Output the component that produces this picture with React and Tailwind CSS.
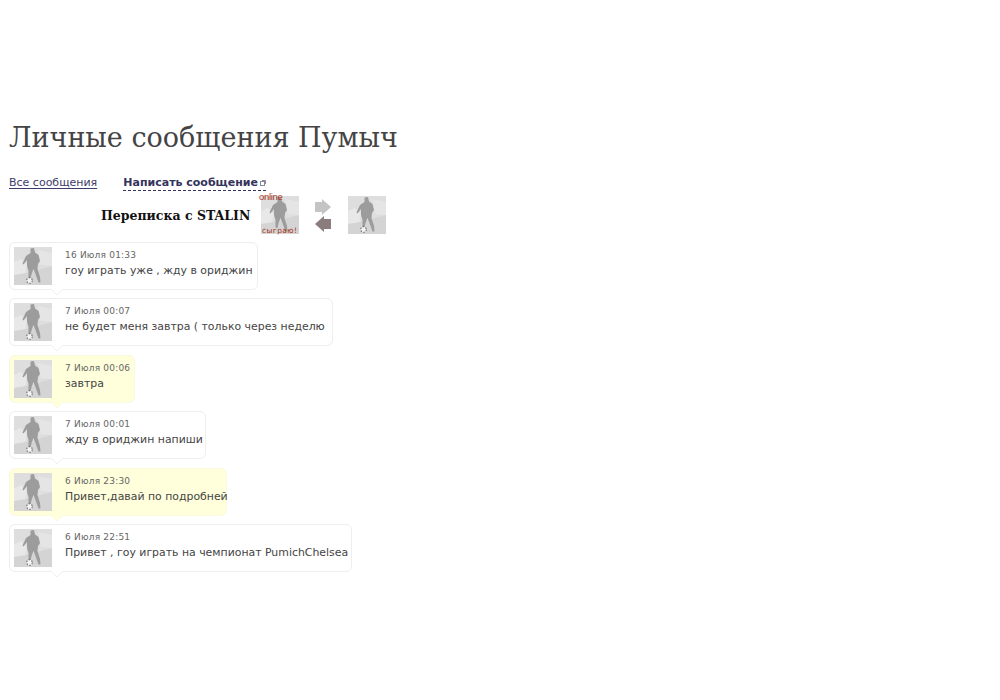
import React from 'react';

const messages = [
  { date: '16 Июля 01:33', text: 'гоу играть уже , жду в ориджин', width: 'w-[249px]' },
  { date: '7 Июля 00:07', text: 'не будет меня завтра ( только через неделю', width: 'w-[324px]' },
  { date: '7 Июля 00:06', text: 'завтра', width: 'w-[126px]', mine: true },
  { date: '7 Июля 00:01', text: 'жду в ориджин напиши', width: 'w-[197px]' },
  { date: '6 Июля 23:30', text: 'Привет,давай по подробней', width: 'w-[218px]', mine: true },
  { date: '6 Июля 22:51', text: 'Привет , гоу играть на чемпионат PumichChelsea', width: 'w-[343px]' },
];

// Player silhouette placeholder
const Avatar = ({ ball = true }) => (
  <svg width="38" height="38" viewBox="0 0 38 38" className="block shrink-0">
    <rect width="38" height="38" fill="#dedede" />
    <path d="M0 15 L7 12 L13 18 L11 27 L0 29Z" fill="#e8e8e8" />
    <path d="M0 28 L12 26 L38 19 L38 38 L0 38Z" fill="#d4d4d4" />
    <path d="M24 3 L38 6 L38 19 L27 18Z" fill="#e5e5e5" />
    <path
      d="M16.5 1.5 L20 1 L21 5.5 L24.5 8 L26 14 L24 17 L23.5 22 L26 30 L26.5 35.5 L24.5 35.5 L21.5 27 L19.5 22 L17.5 27 L16.5 32 L14.5 31.5 L14.5 24 L13 19 L13 13 L9.5 17.5 L8.5 16.5 L12 9 L16.5 6Z"
      fill="#9c9c9c"
    />
    {ball && <circle cx="15.5" cy="33.5" r="2.8" fill="#f4f4f4" stroke="#777777" strokeWidth="1.2" strokeDasharray="1.5 1.5" />}
  </svg>
);

const Message = ({ date, text, width, mine }) => (
  <div
    className={`relative h-[48px] flex items-start gap-[13px] p-[4px] rounded-[6px] border ${width} ${
      mine ? 'bg-[#ffffdc] border-[#f9f9dc]' : 'bg-white border-[#eeeeee]'
    }`}
  >
    <Avatar />
    <div className="whitespace-nowrap pt-[1px]">
      <div className="text-[9px] leading-[15px] tracking-[0.2px] text-[#666666]">{date}</div>
      <div className="text-[10.9px] leading-[16px] text-[#444444]">{text}</div>
    </div>
    <svg width="12" height="6" viewBox="0 0 12 6" className="absolute left-[41px] bottom-[-6px]">
      <path d="M0 0 L6 6 L12 0Z" fill={mine ? '#ffffdc' : '#ffffff'} />
      <path d="M0 0 L6 6 L12 0" fill="none" stroke={mine ? '#f9f9dc' : '#eeeeee'} />
    </svg>
  </div>
);

export default function App() {
  return (
    <div className="w-[1000px] h-[700px] bg-white pl-[9px] pt-[120px] font-['DejaVu_Sans',sans-serif] overflow-hidden">
      <h1 className="font-['DejaVu_Serif',serif] text-[27px] leading-[36px] text-[#444444] whitespace-nowrap">
        Личные сообщения Пумыч
      </h1>

      <div className="flex items-center mt-[19px] h-[16px] text-[11px] text-[#3d3d6b] whitespace-nowrap">
        <a className="underline underline-offset-2">Все сообщения</a>
        <a className="ml-[26px] font-bold text-[#33335c] border-b border-dashed border-[#33335c] flex items-center gap-[2px] leading-[14px]">
          Написать сообщение
          <svg width="6" height="6" viewBox="0 0 6 6">
            <rect x="0.5" y="1.5" width="4" height="4" fill="none" stroke="#888899" />
            <path d="M2 0.5 H5.5 V4" fill="none" stroke="#888899" />
          </svg>
        </a>
      </div>

      <div className="flex items-center mt-[5px] h-[38px]">
        <div className="ml-[92px] w-[160px] pt-[2px] font-['DejaVu_Serif',serif] font-bold text-[12.5px] text-[#111111] whitespace-nowrap">
          Переписка с STALIN
        </div>
        <div className="relative">
          <Avatar ball={false} />
          <span className="absolute left-[-2px] top-[-4px] font-['Liberation_Sans',sans-serif] text-[9.5px] leading-[10px] tracking-[-0.3px] text-[#a5341c]">
            online
          </span>
          <span className="absolute left-[1px] bottom-[-1px] text-[7.5px] leading-[9px] tracking-[0.4px] text-[#a5341c]">
            сыграю!
          </span>
        </div>
        <svg width="18" height="34" viewBox="0 0 18 34" className="ml-[15px]">
          <path d="M1 4 H8 V1 L17 9 L8 17 V14 H1Z" fill="#c4c4c4" />
          <path d="M17 21 H10 V18 L1 26 L10 34 V31 H17Z" fill="#8b7d7d" />
        </svg>
        <div className="ml-[16px]">
          <Avatar />
        </div>
      </div>

      <div className="flex flex-col gap-[8.4px] mt-[8px]">
        {messages.map((m) => (
          <Message key={m.date} {...m} />
        ))}
      </div>
    </div>
  );
}
